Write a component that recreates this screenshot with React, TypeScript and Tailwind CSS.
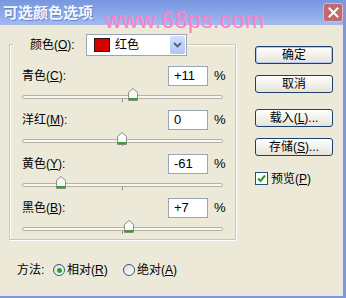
import React from "react";

function Slider({ value }: { value: number }) {
  const cx = 112 + value;
  return (
    <svg width={225} height={24} className="block">
      <rect x={12.5} y={9.5} width={200} height={3} rx={1.5} fill="#f7f7f3" stroke="#b3b1a2" />
      <line x1={112.5} y1={13} x2={112.5} y2={16} stroke="#8f8d80" />
      <path
        d={`M${cx - 4.5} 14.5 L${cx - 4.5} 6.5 L${cx} 2.5 L${cx + 4.5} 6.5 L${cx + 4.5} 14.5 Z`}
        fill="#fbfbf8"
        stroke="#8e8c82"
      />
      <rect x={cx - 4} y={12} width={8} height={2} fill="#2fa52f" />
    </svg>
  );
}

function Row({ label, mn, value, slider }: { label: string; mn: string; value: string; slider: number }) {
  return (
    <div className="flex flex-col">
      <div className="flex h-[20px] items-center pl-[12px]">
        <span className="w-[146px] text-[12px] leading-none">
          {label}(<span className="underline">{mn}</span>):
        </span>
        <div className="flex h-[20px] w-[40px] items-center border border-[#9aa6b4] bg-white pl-[5px] text-[13px]">
          {value}
        </div>
        <span className="ml-[6px] text-[13px]">%</span>
      </div>
      <Slider value={slider} />
    </div>
  );
}

function Btn({ children, def }: { children: React.ReactNode; def?: boolean }) {
  return (
    <div
      className={`flex h-[18px] w-[78px] items-center justify-center rounded-[3px] border border-[#1d3f6e] bg-gradient-to-b from-white to-[#e6e4d8] text-[12px] leading-none ${
        def ? "shadow-[inset_0_0_0_1px_#b6c8f0]" : ""
      }`}
    >
      {children}
    </div>
  );
}

function Radio({ on }: { on?: boolean }) {
  return (
    <div className="flex h-[12px] w-[12px] items-center justify-center rounded-full border border-[#2c5886] bg-gradient-to-br from-[#dcdcd4] to-white">
      {on && <div className="h-[5px] w-[5px] rounded-full bg-[#2aa52a]" />}
    </div>
  );
}

export default function App() {
  return (
    <div className="relative flex h-[298px] w-[346px] flex-col overflow-hidden border-b-[2px] border-r-[3px] border-[#7d98dc] bg-[#ece9d8] font-['Liberation_Sans','Noto_Sans_CJK_SC',sans-serif] text-black">
      {/* title bar */}
      <div className="flex h-[25px] shrink-0 items-center justify-between bg-gradient-to-b from-[#7896df] via-[#8aa7e8] to-[#a4bbef] pl-[3px]">
        <span className="text-[15px] font-bold leading-none text-[#f4f7ff] [text-shadow:1px_1px_0_#6a86c8]">
          可选颜色选项
        </span>
        <div className="flex h-[19px] w-[20px] items-center justify-center rounded-[3px] border border-[#e4b6bb] bg-[#c4686f]">
          <svg width="11" height="11" viewBox="0 0 11 11">
            <path d="M1.5 1.5 L9.5 9.5 M9.5 1.5 L1.5 9.5" stroke="white" strokeWidth="2" strokeLinecap="square" />
          </svg>
        </div>
      </div>

      {/* watermark */}
      <div className="absolute left-[105px] top-[9px] z-10 text-[23px] leading-[22px] tracking-[0.4px] text-[#ff80c8]">
        www.68ps.com
      </div>

      {/* body */}
      <div className="flex items-start">
        <div className="ml-[9px] mt-[19px] flex flex-col">
          <div className="h-[196px] w-[227px] border border-[#c9c6b4] shadow-[inset_1px_1px_0_#ffffff,1px_1px_0_#ffffff]">
            {/* header */}
            <div className="-mt-[11px] ml-[3px] flex h-[22px]">
              <div className="flex items-center bg-[#ece9d8] pl-[17px] pr-[1px]">
                <span className="w-[56px] text-[12px] leading-none">
                  颜色(<span className="underline">O</span>):
                </span>
                <div className="flex h-[22px] w-[101px] items-center border border-[#9aa6b4] bg-white pl-[7px]">
                  <div className="h-[14px] w-[16px] border border-[#3a1010] bg-[#d60000]" />
                  <span className="ml-[5px] flex-1 text-[12px] leading-none">红色</span>
                  <div className="mr-[1px] flex h-[18px] w-[15px] items-center justify-center rounded-[2px] bg-gradient-to-b from-[#d2dffb] to-[#aec4f2]">
                    <svg width="9" height="6" viewBox="0 0 9 6">
                      <path d="M1 1 L4.5 4.5 L8 1" stroke="#4d6185" strokeWidth="1.8" fill="none" />
                    </svg>
                  </div>
                </div>
              </div>
            </div>
            <div className="mt-[10px] flex flex-col">
              <Row label="青色" mn="C" value="+11" slider={11} />
              <Row label="洋红" mn="M" value="0" slider={0} />
              <Row label="黄色" mn="Y" value="-61" slider={-61} />
              <Row label="黑色" mn="B" value="+7" slider={7} />
            </div>
          </div>

          {/* method */}
          <div className="mt-[22px] flex h-[16px] items-center pl-[8px] text-[12px] leading-none">
            <span className="w-[36px]">方法:</span>
            <Radio on />
            <span className="ml-[2px] w-[56px]">
              相对(<span className="underline">R</span>)
            </span>
            <Radio />
            <span className="ml-[2px]">
              绝对(<span className="underline">A</span>)
            </span>
          </div>
        </div>

        {/* buttons */}
        <div className="ml-[19px] mt-[21px] flex w-[78px] flex-col">
          <Btn def>确定</Btn>
          <div className="mt-[11px]">
            <Btn>取消</Btn>
          </div>
          <div className="mt-[16px]">
            <Btn>
              载入(<span className="underline">L</span>)...
            </Btn>
          </div>
          <div className="mt-[11px]">
            <Btn>
              存储(<span className="underline">S</span>)...
            </Btn>
          </div>
          <div className="mt-[16px] flex items-center">
            <div className="flex h-[13px] w-[13px] items-center justify-center border border-[#1c5180] bg-white">
              <svg width="9" height="9" viewBox="0 0 9 9">
                <path d="M1 4.5 L3.5 7 L8 1.5" stroke="#21a121" strokeWidth="2" fill="none" />
              </svg>
            </div>
            <span className="ml-[3px] text-[12px] leading-none">
              预览(<span className="underline">P</span>)
            </span>
          </div>
        </div>
      </div>
    </div>
  );
}
